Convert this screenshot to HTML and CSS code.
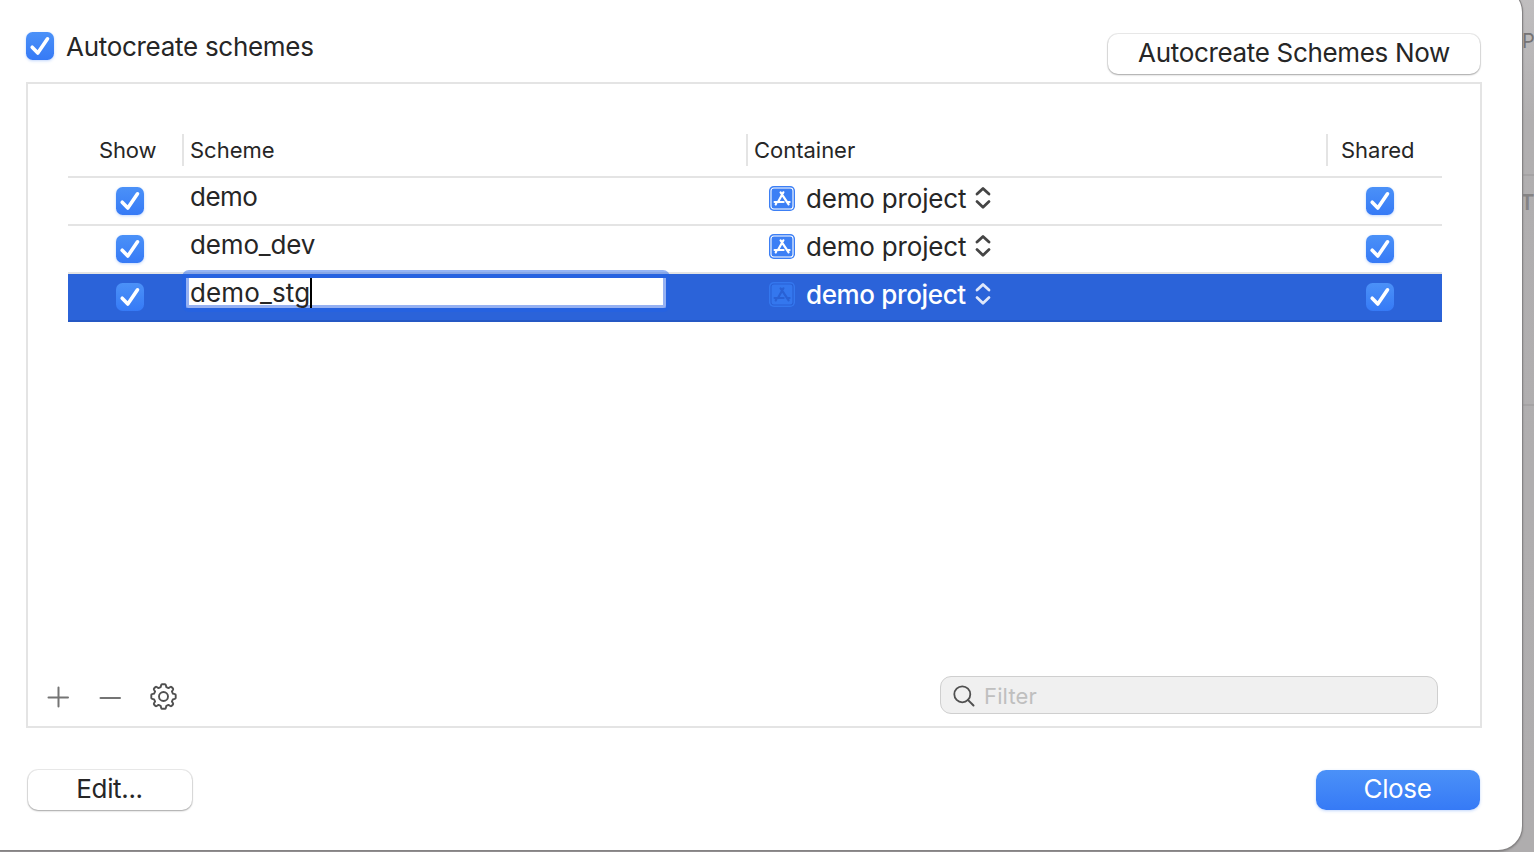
FILE: index.html
```html
<!DOCTYPE html>
<html lang="en">
<head>
<meta charset="utf-8">
<title>Manage Schemes</title>
<link rel="stylesheet" href="styles.css">
</head>
<body>
<svg class="defs" aria-hidden="true">
  <symbol id="tick" viewBox="0 0 28 28"><path d="M6.2 15.2 11.8 21 21.5 6.8" fill="none" stroke="#fff" stroke-width="3.6" stroke-linecap="round" stroke-linejoin="round"/></symbol>
  <symbol id="project" viewBox="0 0 26 26">
    <rect class="tile" x="0" y="0" width="26" height="25" rx="4.8"/>
    <rect class="ink" x="2" y="2" width="22" height="21" rx="2.8" stroke-width="1.1"/>
    <path class="ink" d="M11.6 6.3 19.6 18.4M14.4 6.3 9 16M7.2 17.4 6.7 18.4M5.6 16H14.6M17.8 16H20.6" stroke-width="2.2" stroke-linecap="round"/>
  </symbol>
  <symbol id="updown" viewBox="0 0 16 24"><path d="M2 8 8 2.4 14 8M2 15.6 8 21.2 14 15.6" fill="none" stroke="currentColor" stroke-width="2.8" stroke-linecap="round" stroke-linejoin="round"/></symbol>
</svg>
<div class="backdrop">
  <div class="peek"><span class="peek-p">P</span><span class="peek-t">T</span></div>
</div>
<main class="dialog">
  <header class="top">
    <label class="auto"><span class="check"><svg><use href="#tick"/></svg></span><span class="auto-text">Autocreate schemes</span></label>
    <button class="btn btn-now"><span>Autocreate Schemes Now</span></button>
  </header>
  <section class="panel">
    <div class="table">
      <div class="row head">
        <div class="th th-show"><span>Show</span></div>
        <div class="th"><span>Scheme</span></div>
        <div class="th"><span>Container</span></div>
        <div class="th th-shared"><span>Shared</span></div>
      </div>
      <div class="row">
        <div class="cell cell-check"><span class="check"><svg><use href="#tick"/></svg></span></div>
        <div class="cell cell-name"><span class="t-demo">demo</span></div>
        <div class="cell cell-container"><svg class="proj"><use href="#project"/></svg><span class="t-proj">demo project</span><svg class="updown"><use href="#updown"/></svg></div>
        <div class="cell cell-shared"><span class="check"><svg><use href="#tick"/></svg></span></div>
      </div>
      <div class="row">
        <div class="cell cell-check"><span class="check"><svg><use href="#tick"/></svg></span></div>
        <div class="cell cell-name"><span class="t-dev">demo_dev</span></div>
        <div class="cell cell-container"><svg class="proj"><use href="#project"/></svg><span class="t-proj">demo project</span><svg class="updown"><use href="#updown"/></svg></div>
        <div class="cell cell-shared"><span class="check"><svg><use href="#tick"/></svg></span></div>
      </div>
      <div class="row selected">
        <div class="cell cell-check"><span class="check"><svg><use href="#tick"/></svg></span></div>
        <div class="cell cell-edit"><div class="field"><span class="t-stg">demo_stg</span><i class="caret"></i></div></div>
        <div class="cell cell-container"><svg class="proj"><use href="#project"/></svg><span class="t-proj">demo project</span><svg class="updown"><use href="#updown"/></svg></div>
        <div class="cell cell-shared"><span class="check"><svg><use href="#tick"/></svg></span></div>
      </div>
    </div>
    <footer class="tools">
      <div class="actions">
        <svg class="plus" viewBox="0 0 22 22"><path d="M11.5 1.5V20.5M1.5 11.5H21" stroke="#747474" stroke-width="2" stroke-linecap="round"/></svg>
        <svg class="minus" viewBox="0 0 22 22"><path d="M1.5 12H21" stroke="#747474" stroke-width="2" stroke-linecap="round"/></svg>
        <svg class="gear" viewBox="-13.5 -13.5 27 27" fill="none" stroke="#505050" stroke-width="1.9" stroke-linejoin="round">
          <path d="M-1.5 -12.2H1.5Q2.1 -12.2 2.3 -11.4L2.8 -9.4Q4 -9 5 -8.4L6.8 -9.5Q7.5 -9.9 8 -9.5L9.5 -8Q9.9 -7.5 9.5 -6.8L8.4 -5Q9 -4 9.4 -2.8L11.4 -2.3Q12.2 -2.1 12.2 -1.5V1.5Q12.2 2.1 11.4 2.3L9.4 2.8Q9 4 8.4 5L9.5 6.8Q9.9 7.5 9.5 8L8 9.5Q7.5 9.9 6.8 9.5L5 8.4Q4 9 2.8 9.4L2.3 11.4Q2.1 12.2 1.5 12.2H-1.5Q-2.1 12.2 -2.3 11.4L-2.8 9.4Q-4 9 -5 8.4L-6.8 9.5Q-7.5 9.9 -8 9.5L-9.5 8Q-9.9 7.5 -9.5 6.8L-8.4 5Q-9 4 -9.4 2.8L-11.4 2.3Q-12.2 2.1 -12.2 1.5V-1.5Q-12.2 -2.1 -11.4 -2.3L-9.4 -2.8Q-9 -4 -8.4 -5L-9.5 -6.8Q-9.9 -7.5 -9.5 -8L-8 -9.5Q-7.5 -9.9 -6.8 -9.5L-5 -8.4Q-4 -9 -2.8 -9.4L-2.3 -11.4Q-2.1 -12.2 -1.5 -12.2Z"/><circle r="4.5"/>
        </svg>
      </div>
      <div class="filter">
        <svg viewBox="0 0 22 22"><path d="M14.9 14.9 20.5 20.5" stroke="#505050" stroke-width="2" stroke-linecap="round"/><circle cx="9.3" cy="9.3" r="8" fill="none" stroke="#505050" stroke-width="1.8"/></svg>
        <span>Filter</span>
      </div>
    </footer>
  </section>
  <footer class="bottom">
    <button class="btn btn-edit"><span>Edit...</span></button>
    <button class="btn btn-close"><span>Close</span></button>
  </footer>
</main>
</body>
</html>
```
FILE: styles.css
```css
* { box-sizing: border-box; }
body {
  margin: 0;
  width: 1534px;
  height: 852px;
  overflow: hidden;
  position: relative;
  background: #b1afb0;
  font-family: Inter, "Liberation Sans", sans-serif;
  font-size: 26px;
  color: #262626;
}
span { white-space: nowrap; }
.defs { position: absolute; width: 0; height: 0; }
.backdrop {
  position: absolute;
  inset: 0;
  background: linear-gradient(#c0bebf 0, #b1afb0 120px, #afadae 100%);
}
.peek {
  position: absolute;
  left: 1522px;
  top: 0;
  width: 12px;
  height: 406px;
  border-bottom: 2px solid #a5a3a4;
  background: linear-gradient(#a5a3a4, #a5a3a4) 0 174px / 12px 2px no-repeat;
  color: #757374;
}
.peek-p { position: absolute; left: 0; top: 29px; font-size: 20px; line-height: 24px; letter-spacing: -1px; }
.peek-t { position: absolute; left: -2px; top: 188px; font-size: 22px; line-height: 28px; font-weight: 600; letter-spacing: -1px; color: #858384; }
.dialog {
  position: relative;
  width: 1522px;
  height: 862px;
  margin-top: -12px;
  padding: 45px 40px 0 26px;
  background: #fff;
  border-radius: 0 24px 24px 0;
  box-shadow: 0 0 0 1px #858384, 0 1px 2px 1px #858384;
  display: flex;
  flex-direction: column;
}
body::before { content: ""; display: table; }
.top { display: flex; justify-content: space-between; height: 49px; }
.auto { display: flex; gap: 12px; height: 28px; margin-top: -1px; }
.auto-text { line-height: 30px; letter-spacing: -0.29px; }
.check {
  display: block;
  width: 28px;
  height: 28px;
  border-radius: 6.5px;
  background: linear-gradient(#4b91f8, #367af6);
  box-shadow: 0 1px 3px rgba(54, 122, 246, .3);
}
.check svg { display: block; width: 28px; height: 28px; }
.btn {
  display: block;
  height: 40px;
  padding: 0 0 2px;
  border: 0;
  border-radius: 10px;
  background: #fff;
  font: inherit;
  color: inherit;
  line-height: 38px;
  letter-spacing: -0.35px;
  box-shadow: 0 0 0 1px rgba(0, 0, 0, .08), 0 1px 2px rgba(0, 0, 0, .3);
}
.btn-now { width: 372px; margin: 1px 2px 0 0; letter-spacing: -0.33px; }
.panel {
  width: 1456px;
  height: 646px;
  border: 2px solid #e4e4e4;
  padding: 50px 38px 0 40px;
  flex: none;
  display: flex;
  flex-direction: column;
}
.table { width: 1374px; height: 540px; }
.row {
  display: grid;
  grid-template-columns: 114px 564px 580px 116px;
  height: 48px;
  border-bottom: 2px solid #e4e4e4;
}
.head { height: 44px; font-size: 22px; }
.th { height: 32px; line-height: 32px; padding-left: 6px; border-left: 2px solid #e4e4e4; letter-spacing: -0.02px; }
.th-show { border-left: 0; padding-left: 31px; letter-spacing: -0.15px; }
.th-shared { padding-left: 13px; }
.selected { background: #2b63d9; border-bottom-color: #2558c4; }
.selected .check { box-shadow: none; }
.cell { display: flex; height: 46px; }
.cell-check { padding: 9px 0 0 48px; }
.cell-name { padding: 4px 0 0 8px; line-height: 30px; }
.t-demo { letter-spacing: -0.5px; }
.t-dev { letter-spacing: -0.15px; }
.t-stg { letter-spacing: 0.13px; }
.cell-shared { padding: 9px 0 0 40px; }
.cell-container { padding: 6px 0 0 23px; line-height: 30px; }
.proj { width: 26px; height: 26px; margin-top: 2px; }
.proj { --tile: #3c7ff5; --ink: #fff; }
.selected .proj { --tile: #3477ee; --ink: #2961d5; }
.tile { fill: var(--tile); }
.ink { fill: none; stroke: var(--ink); }
.t-proj { width: 160px; margin-left: 11px; letter-spacing: -0.18px; }
.selected .t-proj { letter-spacing: -0.36px; }
.updown { width: 16px; height: 24px; margin: 2px 0 0 9px; color: #454545; }
.selected .cell-container { color: #fff; font-weight: 500; }
.selected .updown { color: #dfe7fa; }
.cell-edit { padding: 4px 0 0 4px; }
.field {
  position: relative;
  width: 480px;
  height: 30px;
  display: flex;
  padding-left: 1px;
  border: 3px solid #96b1f2;
  border-top: 0;
  background: #fff;
}
.field::before {
  content: "";
  position: absolute;
  inset: -8px -7px -7px -7px;
  border: 4px solid rgba(33, 99, 232, .48);
  border-top-width: 8px;
  border-radius: 7px;
}
.field span { line-height: 30px; position: relative; }
.caret { width: 2px; height: 30px; background: #000; position: relative; }
.tools { display: flex; justify-content: space-between; width: 1370px; height: 38px; }
.actions { display: flex; margin-left: -21px; }
.plus { width: 22px; height: 22px; margin-top: 12px; }
.minus { width: 22px; height: 22px; margin: 12px 0 0 30px; }
.gear { width: 27px; height: 27px; margin: 9px 0 0 29px; }
.filter {
  display: flex;
  width: 498px;
  height: 38px;
  margin-top: 2px;
  padding: 8px 0 0 12px;
  border: 1px solid #cfcfcf;
  border-radius: 11px;
  background: #f0f0f0;
  font-size: 22px;
  line-height: 22px;
  letter-spacing: 0.15px;
  color: #bfbfbf;
}
.filter svg { width: 22px; height: 22px; margin: 0 9px 0 0; }
.bottom { display: flex; justify-content: space-between; padding: 42px 2px 0 2px; }
.btn-edit { width: 164px; padding-right: 1px; }
.btn-close {
  width: 164px;
  padding-right: 1px;
  color: #fff;
  background: linear-gradient(#4b91f8, #367af6);
  box-shadow: 0 1px 3px rgba(54, 122, 246, .3);
}
```
